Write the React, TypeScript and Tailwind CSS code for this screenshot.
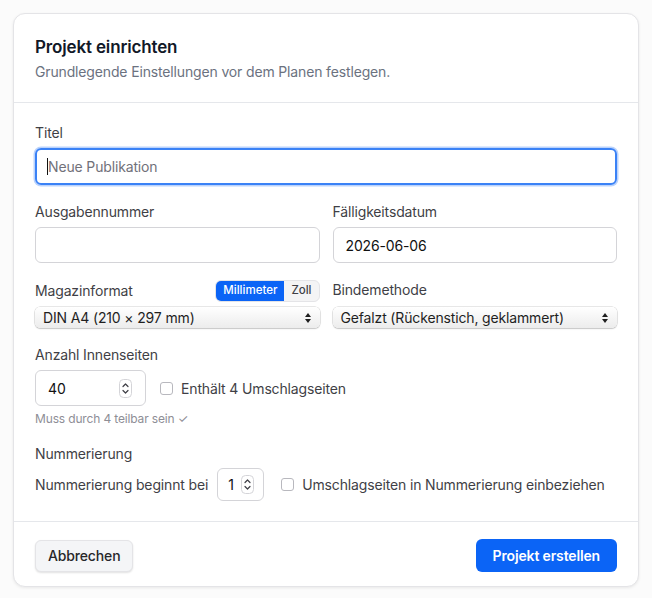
import React, { useState } from 'react';

const font = { fontFamily: 'Inter, "Noto Sans", sans-serif' };

const Stepper = () => (
  <svg width="13" height="19" viewBox="0 0 13 19" className="shrink-0">
    <rect x="0.5" y="0.5" width="12" height="18" rx="4" fill="#fff" stroke="#d4d4d8" />
    <path d="M4 7.5 L6.5 5 L9 7.5" fill="none" stroke="#3f3f46" strokeWidth="1.2" strokeLinecap="round" strokeLinejoin="round" />
    <path d="M4 11.5 L6.5 14 L9 11.5" fill="none" stroke="#3f3f46" strokeWidth="1.2" strokeLinecap="round" strokeLinejoin="round" />
  </svg>
);

const SelectArrows = () => (
  <svg width="8" height="12" viewBox="0 0 8 12" className="shrink-0">
    <path d="M4 1 L7 5 L1 5 Z" fill="#1f1f1f" />
    <path d="M4 11 L7 7 L1 7 Z" fill="#1f1f1f" />
  </svg>
);

const NativeSelect = ({ value }: { value: string }) => (
  <div className="flex h-[21px] items-center justify-between rounded-[5px] bg-gradient-to-b from-white to-[#ececec] pl-2 pr-2 text-[14px] text-[#1f1f1f] shadow-[0_0_0_0.5px_rgba(0,0,0,0.18),0_1px_1.5px_rgba(0,0,0,0.15)]">
    <span>{value}</span>
    <SelectArrows />
  </div>
);

const Checkbox = () => (
  <span className="inline-block h-[13px] w-[13px] shrink-0 rounded-[3px] border border-[#b8b8be] bg-white" />
);

export default function App() {
  const [unit, setUnit] = useState<'mm' | 'in'>('mm');

  return (
    <div className="min-h-screen bg-[#fbfbfb] px-[13px] pt-[13px] tracking-[-0.15px]" style={font}>
      <div className="overflow-hidden rounded-xl border border-[#e4e4e7] bg-white shadow-[0_1px_3px_rgba(0,0,0,0.08)]">
        {/* header */}
        <div className="border-b border-[#e5e7eb] px-[21px] pb-[20px] pt-[21px]">
          <h2 className="text-[17px] font-semibold leading-6 text-[#111827]">Projekt einrichten</h2>
          <p className="mt-[3px] text-[14px] leading-5 text-[#6b7280]">Grundlegende Einstellungen vor dem Planen festlegen.</p>
        </div>

        {/* body */}
        <div className="flex flex-col gap-[17px] px-[21px] pb-[20px] pt-[20px] text-[14px] text-[#3f3f46]">
          <div className="flex flex-col gap-[5px]">
            <label className="leading-5">Titel</label>
            <div className="flex h-[37px] items-center rounded-md border-2 border-[#3b82f6] px-[10px] shadow-[0_0_0_1.5px_rgba(59,130,246,0.35)]">
              <span className="h-[17px] w-px bg-[#111]" />
              <span className="text-[#71717a]">Neue Publikation</span>
            </div>
          </div>

          <div className="grid grid-cols-2 gap-[13px]">
            <div className="flex flex-col gap-[5px]">
              <label className="leading-5">Ausgabennummer</label>
              <div className="h-[36px] rounded-md border border-[#d4d4d8]" />
            </div>
            <div className="flex flex-col gap-[5px]">
              <label className="leading-5">Fälligkeitsdatum</label>
              <div className="flex h-[36px] items-center rounded-md border border-[#d4d4d8] px-3 text-[#111]">2026-06-06</div>
            </div>
          </div>

          <div className="grid grid-cols-2 gap-[13px]">
            <div className="flex flex-col gap-[5px]">
              <div className="flex items-center justify-between">
                <label className="leading-5">Magazinformat</label>
                <div className="flex h-[22px] overflow-hidden rounded-md border border-[#e4e4e7] bg-[#f4f4f5] text-[11.5px] font-medium tracking-normal">
                  <button
                    onClick={() => setUnit('mm')}
                    className={`px-[7px] ${unit === 'mm' ? 'bg-[#0b64f6] text-white' : 'text-[#3f3f46]'}`}
                  >
                    Millimeter
                  </button>
                  <button
                    onClick={() => setUnit('in')}
                    className={`px-[7px] ${unit === 'in' ? 'bg-[#0b64f6] text-white' : 'text-[#3f3f46]'}`}
                  >
                    Zoll
                  </button>
                </div>
              </div>
              <NativeSelect value="DIN A4 (210 × 297 mm)" />
            </div>
            <div className="flex flex-col justify-between">
              <label className="leading-5">Bindemethode</label>
              <NativeSelect value="Gefalzt (Rückenstich, geklammert)" />
            </div>
          </div>

          <div className="flex flex-col gap-[5px]">
            <label className="leading-5">Anzahl Innenseiten</label>
            <div className="flex items-center gap-[14px]">
              <div className="flex h-[36px] w-[111px] items-center justify-between rounded-md border border-[#d4d4d8] pl-3 pr-[13px] text-[#111]">
                <span>40</span>
                <Stepper />
              </div>
              <label className="flex items-center gap-[8px]">
                <Checkbox />
                <span>Enthält 4 Umschlagseiten</span>
              </label>
            </div>
            <p className="text-[12px] leading-4 text-[#8e8e96]">Muss durch 4 teilbar sein ✓</p>
          </div>

          <div className="flex flex-col gap-[4px]">
            <label className="leading-5">Nummerierung</label>
            <div className="flex items-center whitespace-nowrap">
              <span className="shrink-0">Nummerierung beginnt bei</span>
              <div className="ml-[9px] flex h-[33px] w-[47px] shrink-0 items-center justify-between rounded-md border border-[#d4d4d8] pl-[10px] pr-[9px] text-[#111]">
                <span>1</span>
                <Stepper />
              </div>
              <label className="ml-[17px] flex items-center gap-[8px]">
                <Checkbox />
                <span>Umschlagseiten in Nummerierung einbeziehen</span>
              </label>
            </div>
          </div>
        </div>

        {/* footer */}
        <div className="flex items-center justify-between border-t border-[#e5e7eb] px-[21px] pb-[14px] pt-[17px]">
          <button className="h-[32px] rounded-md border border-[#e4e4e7] bg-[#f4f5f7] px-[12px] text-[14px] font-medium text-[#27272a] shadow-[0_1px_2px_rgba(0,0,0,0.12)]">
            Abbrechen
          </button>
          <button className="h-[33px] rounded-md bg-[#0b64f6] px-[17px] text-[14px] font-semibold text-white">
            Projekt erstellen
          </button>
        </div>
      </div>
    </div>
  );
}
